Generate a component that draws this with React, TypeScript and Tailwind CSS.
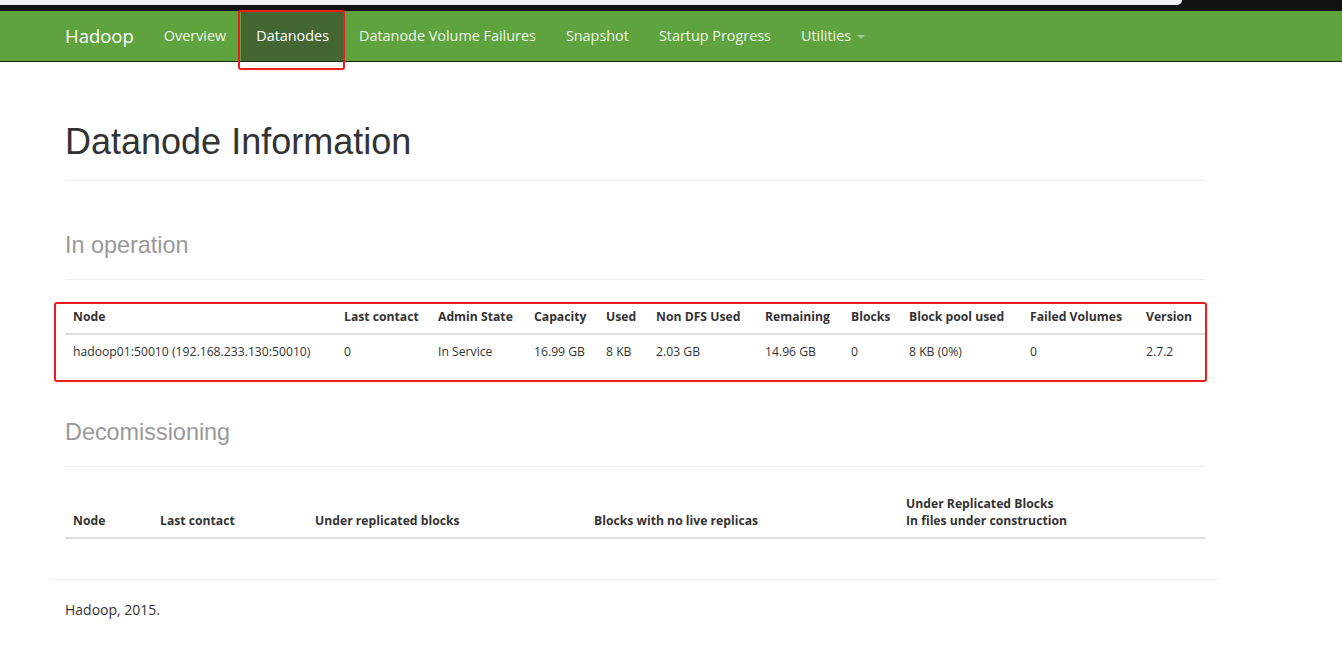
const navLinks = [
  { label: 'Overview' },
  { label: 'Datanodes', active: true },
  { label: 'Datanode Volume Failures' },
  { label: 'Snapshot' },
  { label: 'Startup Progress' },
];

const liveCols = [
  { label: 'Node', w: 'w-[271px]' },
  { label: 'Last contact', w: 'w-[94px]' },
  { label: 'Admin State', w: 'w-[96px]' },
  { label: 'Capacity', w: 'w-[72px]' },
  { label: 'Used', w: 'w-[50px]' },
  { label: 'Non DFS Used', w: 'w-[109px]' },
  { label: 'Remaining', w: 'w-[86px]' },
  { label: 'Blocks', w: 'w-[58px]' },
  { label: 'Block pool used', w: 'w-[121px]' },
  { label: 'Failed Volumes', w: 'w-[116px]' },
  { label: 'Version', w: 'w-[67px]' },
];

const liveRow = [
  'hadoop01:50010 (192.168.233.130:50010)',
  '0',
  'In Service',
  '16.99 GB',
  '8 KB',
  '2.03 GB',
  '14.96 GB',
  '0',
  '8 KB (0%)',
  '0',
  '2.7.2',
];

const decomCols = [
  { label: ['Node'], w: 'w-[87px]' },
  { label: ['Last contact'], w: 'w-[155px]' },
  { label: ['Under replicated blocks'], w: 'w-[279px]' },
  { label: ['Blocks with no live replicas'], w: 'w-[312px]' },
  { label: ['Under Replicated Blocks', 'In files under construction'], w: 'w-[307px]' },
];

function Navbar() {
  return (
    <nav className="h-[51px] bg-[#5fa33e] border-b border-[#1b2a14]">
      <div className="ml-[50px] w-[1170px] px-[15px] flex items-center h-[50px]">
        <span className="text-[18.5px] text-white pr-[15px]">Hadoop</span>
        {navLinks.map((link) => (
          <span
            key={link.label}
            className={
              link.active
                ? 'h-[50px] flex items-center px-[15px] bg-[#436632] text-white text-[14.4px]'
                : 'h-[50px] flex items-center px-[15px] text-[#eef5ea] text-[14.4px]'
            }
          >
            {link.label}
          </span>
        ))}
        <span className="h-[50px] flex items-center px-[15px] text-[#eef5ea] text-[14.4px]">
          Utilities
          <span className="ml-[6px] mt-[2px] w-0 h-0 border-x-[4px] border-x-transparent border-t-[4px] border-t-[#a9c99a]" />
        </span>
      </div>
    </nav>
  );
}

export default function App() {
  return (
    <div className="relative min-h-[651px] bg-white text-[#333] font-['Open_Sans',sans-serif]">
      <div className="h-[11px] bg-[#111]">
        <div className="w-[1182px] h-[5px] bg-[#f2f2f4] rounded-br-[6px]" />
      </div>
      <Navbar />

      <div className="ml-[50px] w-[1170px] px-[15px]">
        <h1 className="mt-[60px] pb-[18px] border-b border-[#eee] text-[36px] leading-[40px] font-['Liberation_Sans',Arial,sans-serif] text-[#333]">
          Datanode Information
        </h1>

        <h3 className="mt-[51px] pb-[21px] border-b border-[#eee] text-[23.4px] leading-[26px] font-['Liberation_Sans',Arial,sans-serif] text-[#999]">
          In operation
        </h3>

        <table className="mt-[20px] w-full table-fixed border-collapse text-[12.2px]">
          <thead>
            <tr>
              {liveCols.map((c) => (
                <th
                  key={c.label}
                  className={`${c.w} px-[8px] py-[8px] leading-[17px] text-left font-bold border-b-2 border-[#ddd] whitespace-nowrap`}
                >
                  {c.label}
                </th>
              ))}
            </tr>
          </thead>
          <tbody>
            <tr>
              {liveRow.map((v, i) => (
                <td key={i} className="px-[8px] py-[8px] leading-[17px] whitespace-nowrap">
                  {v}
                </td>
              ))}
            </tr>
          </tbody>
        </table>

        <h3 className="mt-[51px] pb-[21px] border-b border-[#eee] text-[23.4px] leading-[26px] font-['Liberation_Sans',Arial,sans-serif] text-[#999]">
          Decomissioning
        </h3>

        <table className="mt-[20px] w-full table-fixed border-collapse text-[12.2px]">
          <thead>
            <tr>
              {decomCols.map((c) => (
                <th
                  key={c.label[0]}
                  className={`${c.w} px-[8px] py-[8px] leading-[17px] text-left align-bottom font-bold border-b-2 border-[#ddd] whitespace-nowrap`}
                >
                  {c.label.map((l) => (
                    <div key={l}>{l}</div>
                  ))}
                </th>
              ))}
            </tr>
          </thead>
          <tbody />
        </table>
      </div>

      <div className="mt-[40px] ml-[50px] w-[1170px] border-t border-[#eee] px-[15px] pt-[20px] text-[14px] leading-[20px]">
        Hadoop, 2015.
      </div>

      {/* red annotation boxes */}
      <div className="absolute left-[238px] top-[10px] w-[107px] h-[60px] border-[2px] border-[#ee1c1c] rounded-[3px]" />
      <div className="absolute left-[54px] top-[302px] w-[1153px] h-[80px] border-[2px] border-[#ee1c1c] rounded-[3px]" />
    </div>
  );
}
